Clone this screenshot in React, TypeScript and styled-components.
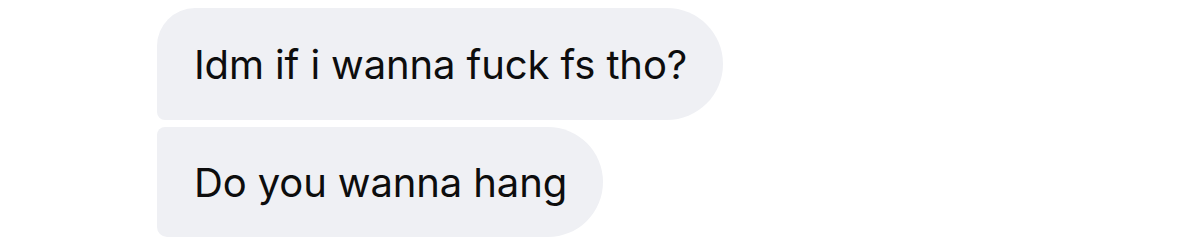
import React from "react";
import styled, { createGlobalStyle } from "styled-components";

const Global = createGlobalStyle`
    body {
        margin: 0;
        background: #ffffff;
    }
`;

function App() {
    return (
        <Container>
            <Global />
            <Bubble first>Idm if i wanna fuck fs tho?</Bubble>
            <Bubble>Do you wanna hang</Bubble>
        </Container>
    );
}

export default App;

const Container = styled.div`
    width: 1200px;
    height: 244px;
    box-sizing: border-box;
    padding: 8px 0 0 157px;

    display: flex;
    flex-direction: column;
    align-items: flex-start;
    gap: 7px;
`;

const Bubble = styled.div<{ first?: boolean }>`
    height: ${(p) => (p.first ? "112px" : "110px")};
    box-sizing: border-box;
    padding: 0 36px 0 37px;

    display: flex;
    align-items: center;

    background: #eff0f4;
    border-radius: ${(p) => (p.first ? "38px 56px 56px 8px" : "8px 55px 55px 10px")};

    font-family: Inter, "Noto Sans", sans-serif;
    font-size: 40px;
    letter-spacing: -0.12px;
    color: #0d0d0d;
    white-space: nowrap;
`;
